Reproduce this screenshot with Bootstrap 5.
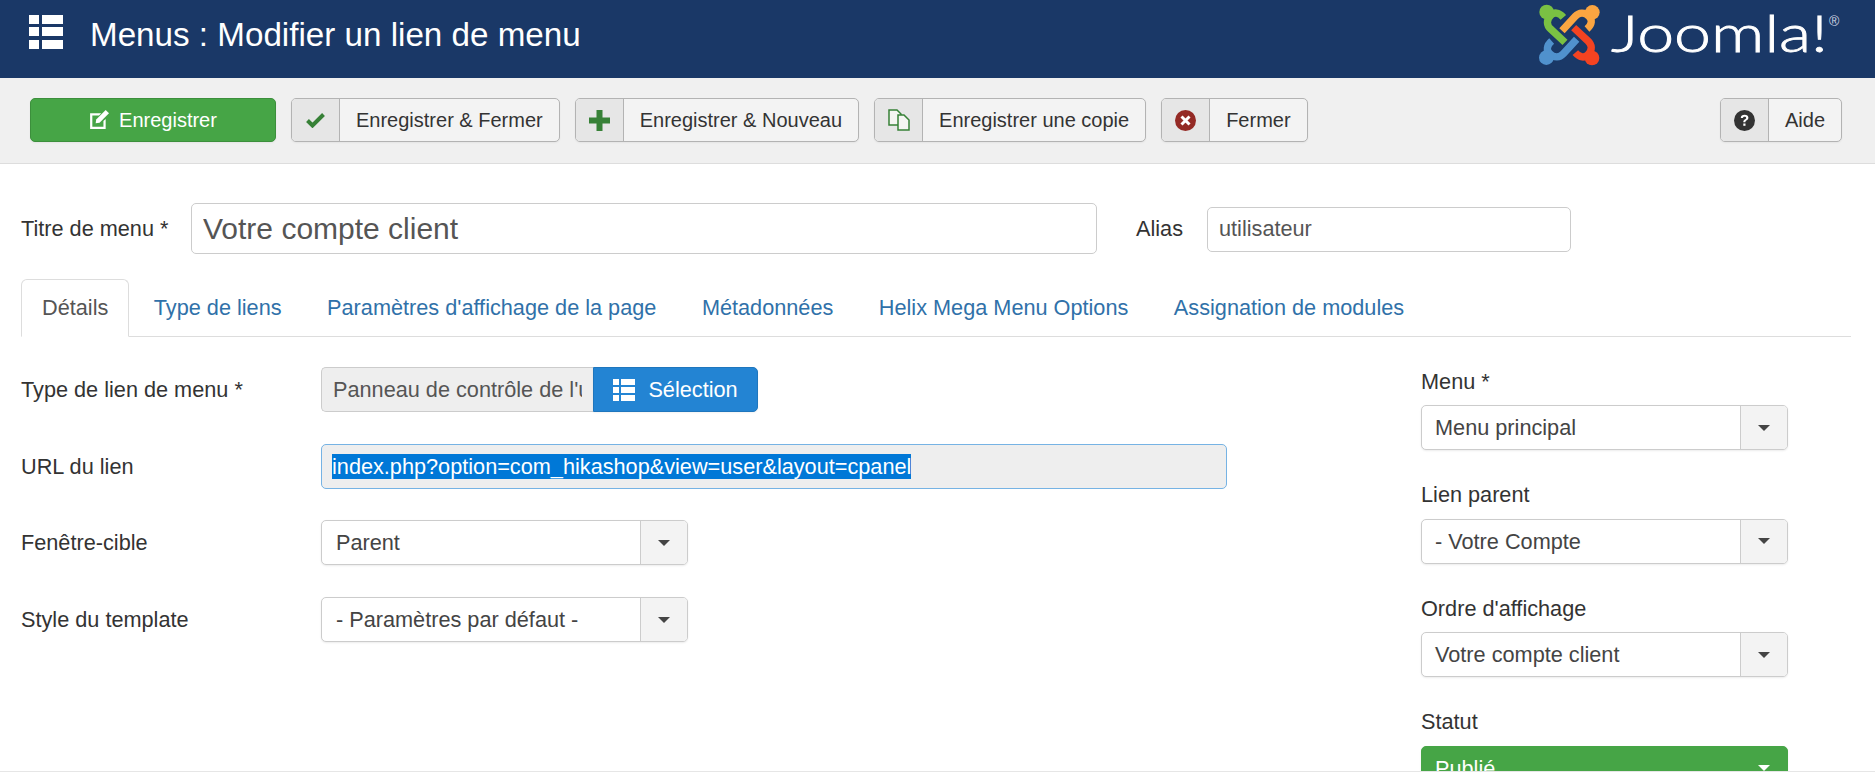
<!DOCTYPE html>
<html lang="fr">
<head>
<meta charset="utf-8">
<title>Menus : Modifier un lien de menu</title>
<link href="https://cdn.jsdelivr.net/npm/bootstrap@5.3.0/dist/css/bootstrap.min.css" rel="stylesheet">
<style>
html,body{height:772px;overflow:hidden}
body{font-family:"Liberation Sans",Arial,sans-serif;font-size:21.7px;line-height:27px;color:#333;background:#fff}
.page-shell{height:772px}
.top-head{height:78px;background:#1a3867;padding-left:29px}
.top-head svg.grid-ico{width:34px;height:34px;fill:#fff;margin-right:27px;margin-bottom:15px}
.top-title{font-size:33.2px;line-height:40px;color:#fff;font-weight:400;margin:0 0 8px}
.joomla-logo{width:320px;height:78px;margin-right:25px;display:block}
.joomla-word{font-family:Lato,"Liberation Sans",sans-serif;font-weight:300;font-size:52px;fill:#fff;stroke:#fff;stroke-width:.8px}
.joomla-reg{font-family:"Liberation Sans",sans-serif;font-size:14px;fill:#cfd6e2}
.tool-bar{height:86px;background:#f0f0f0;border-bottom:1px solid #ddd;padding:20px 33px 0 30px;gap:15px}
.tool-btn{height:44px;border:1px solid #b3b3b3;border-radius:5px;background:#f3f3f3;color:#333;font-size:20px;line-height:1;padding:0;box-shadow:0 1px 2px rgba(0,0,0,.05)}
.tool-ico{width:48px;height:100%;background:#e6e6e6;border-right:1px solid #b3b3b3;border-radius:4px 0 0 4px}
.tool-txt{padding:0 16px}
.tool-btn.tool-save{width:246px;background:#46a546;border-color:#3c8f3c;color:#fff;gap:10px}
.tool-ico svg,.tool-save svg{display:block}
.body-area{padding:39px 24px 0 21px;min-height:0}
.title-row{height:51px}
.title-label{width:170px}
.title-field.form-control{width:906px;height:51px;font-size:30px;color:#555;border:1px solid #ccc;border-radius:5px;padding:0 11px;box-shadow:none}
.alias-label{margin-left:39px;width:71px}
.alias-field.form-control{width:364px;height:45px;font-size:21.7px;color:#555;border:1px solid #ccc;border-radius:5px;padding:0 11px;box-shadow:none;margin-top:1px}
.tab-strip.nav-tabs{margin-top:25px;border-bottom:1px solid #ddd;--bs-nav-tabs-border-width:0}
.tab-strip .nav-link{padding:0 20px;height:58px;line-height:56px;border:1px solid transparent;border-radius:6px 6px 0 0;color:#3071a9;font-size:21.7px;margin-right:3.500px;margin-bottom:-1px}
.tab-strip .nav-link.active{color:#555;background:#fff;border-color:#ddd #ddd #fff}
.main-col{width:1400px;padding-top:30px;gap:31.7px}
.side-col{width:367px;padding-top:30.500px}
.field-row{height:45px}
.field-label{width:300px}
.type-box{width:272px;height:45px;background:#eee;border:1px solid #ccc;border-right:0;border-radius:5px 0 0 5px;padding:0 11px;color:#555;white-space:nowrap;overflow:hidden;line-height:44px}
.type-clip{overflow:hidden;width:100%}
.type-pick{width:165px;height:45px;background:#2384d3;border:1px solid #1f76bd;border-radius:0 5px 5px 0;color:#fff;font-size:21.7px;gap:13px;padding:1px 0 0;box-shadow:0 1px 2px rgba(0,0,0,.05)}
.type-pick svg{fill:#fff;display:block}
.url-box{width:906px;height:45px;background:#eee;border:1px solid #76b3e4;border-radius:5px;padding:0 10px;color:#000}
.url-sel{background:#0078d7;color:#fff;line-height:25px;white-space:nowrap}
.pick-box{height:45px;border:1px solid #ccc;border-radius:5px;background:#fff;color:#444;box-shadow:0 1px 2px rgba(0,0,0,.08);overflow:hidden}
.pick-wide{width:367px}
.pick-wide .pick-text{padding-left:14px}
.pick-side{width:367px}
.pick-text{padding:0 13px;white-space:nowrap}
.pick-caret{width:47px;height:100%;background:#f3f3f3;border-left:1px solid #ccc}
.pick-caret i{display:block;width:0;height:0;border-left:6px solid transparent;border-right:6px solid transparent;border-top:6px solid #444}
.side-label{height:28px;line-height:28px;margin-bottom:9.500px}
.side-group{margin-bottom:31px}
.pick-green{background:#46a546;border-color:#46a546;color:#fff;align-items:flex-start}
.pick-green .pick-caret{background:transparent;border:0}
.pick-green .pick-caret i{border-top-color:#fff}
.pick-green .pick-text{line-height:43px}
.foot-line{height:1px;background:#e6e6e6}
</style>
</head>
<body>
<div class="page-shell d-flex flex-column">
  <header class="top-head d-flex align-items-center flex-shrink-0">
    <svg class="grid-ico" viewBox="0 0 34 34"><rect x="0" y="0" width="10" height="9"/><rect x="13" y="0" width="21" height="9"/><rect x="0" y="12" width="10" height="9"/><rect x="13" y="12" width="21" height="9"/><rect x="0" y="25" width="10" height="9"/><rect x="13" y="25" width="21" height="9"/></svg>
    <h1 class="top-title">Menus : Modifier un lien de menu</h1>
    <svg class="joomla-logo ms-auto" viewBox="0 0 320 78">
      <g transform="scale(.3333)">
        <g fill="none" stroke-linejoin="round">
          <g transform="rotate(270 118 105)"><path d="M100 52C86 36 72 36 62 46C48 60 50 76 62 87L105 127" stroke="#1a3867" stroke-width="29"/><path d="M100 52C86 36 72 36 62 46C48 60 50 76 62 87L105 127" stroke="#5091cd" stroke-width="22"/><circle cx="50" cy="36" r="22" fill="#5091cd"/></g>
          <g transform="rotate(90 118 105)"><path d="M100 52C86 36 72 36 62 46C48 60 50 76 62 87L105 127" stroke="#1a3867" stroke-width="29"/><path d="M100 52C86 36 72 36 62 46C48 60 50 76 62 87L105 127" stroke="#fba541" stroke-width="22"/><circle cx="50" cy="36" r="22" fill="#fba541"/></g>
          <g transform="rotate(180 118 105)"><path d="M100 52C86 36 72 36 62 46C48 60 50 76 62 87L105 127" stroke="#1a3867" stroke-width="29"/><path d="M100 52C86 36 72 36 62 46C48 60 50 76 62 87L105 127" stroke="#f44321" stroke-width="22"/><circle cx="50" cy="36" r="22" fill="#f44321"/></g>
          <g><path d="M100 52C86 36 72 36 62 46C48 60 50 76 62 87L105 127" stroke="#1a3867" stroke-width="29"/><path d="M100 52C86 36 72 36 62 46C48 60 50 76 62 87L105 127" stroke="#7ac143" stroke-width="22"/><circle cx="50" cy="36" r="22" fill="#7ac143"/></g>
        </g>
      </g>
      <text class="joomla-word" x="81" y="52" textLength="217" lengthAdjust="spacingAndGlyphs">Joomla!</text>
      <text class="joomla-reg" x="299" y="26">®</text>
    </svg>
  </header>

  <div class="tool-bar d-flex flex-shrink-0">
    <button type="button" class="btn tool-btn tool-save d-flex align-items-center justify-content-center">
      <svg width="20" height="20" viewBox="0 0 18 18" fill="#fff"><path d="M1 3h10L9 5H3v10h10V10l2-2v9H1z"/><path d="M15 0l3 3-8.500 8.500-3.500.5.500-3.500z"/></svg>
      <span>Enregistrer</span>
    </button>
    <button type="button" class="btn tool-btn d-flex align-items-center">
      <span class="tool-ico d-flex align-items-center justify-content-center"><svg width="19" height="16" viewBox="0 0 19 16"><path d="M1.500 8.500l5 5L17.500 2.500" fill="none" stroke="#378137" stroke-width="4"/></svg></span>
      <span class="tool-txt">Enregistrer &amp; Fermer</span>
    </button>
    <button type="button" class="btn tool-btn d-flex align-items-center">
      <span class="tool-ico d-flex align-items-center justify-content-center"><svg width="21" height="21" viewBox="0 0 21 21"><path d="M7.500 0h6v7.500H21v6h-7.500V21h-6v-7.500H0v-6h7.500z" fill="#378137"/></svg></span>
      <span class="tool-txt">Enregistrer &amp; Nouveau</span>
    </button>
    <button type="button" class="btn tool-btn d-flex align-items-center">
      <span class="tool-ico d-flex align-items-center justify-content-center"><svg width="22" height="22" viewBox="0 0 22 22" fill="#f5f5f2" stroke="#378137" stroke-width="1.500"><path d="M1 1h8l4 4v11H1z"/><path d="M10 6h6l5 5v10H10z"/></svg></span>
      <span class="tool-txt">Enregistrer une copie</span>
    </button>
    <button type="button" class="btn tool-btn d-flex align-items-center">
      <span class="tool-ico d-flex align-items-center justify-content-center"><svg width="21" height="21" viewBox="0 0 21 21"><circle cx="10.500" cy="10.500" r="10.500" fill="#942a25"/><path d="M6.500 6.500l8 8M14.500 6.500l-8 8" stroke="#fff" stroke-width="3"/></svg></span>
      <span class="tool-txt">Fermer</span>
    </button>
    <button type="button" class="btn tool-btn d-flex align-items-center ms-auto">
      <span class="tool-ico d-flex align-items-center justify-content-center"><svg width="21" height="21" viewBox="0 0 21 21"><circle cx="10.500" cy="10.500" r="10.500" fill="#333"/><path d="M6.800 8c0-2 1.600-3.200 3.800-3.200s3.800 1.200 3.800 3c0 2.500-3 2.500-3 4.400H9.300c0-3 2.900-3 2.900-4.300 0-.7-.6-1.200-1.600-1.200S8.900 7.300 8.900 8z" fill="#fff"/><rect x="9.300" y="13.500" width="2.200" height="2.300" fill="#fff"/></svg></span>
      <span class="tool-txt">Aide</span>
    </button>
  </div>

  <main class="body-area flex-grow-1 overflow-hidden">
    <div class="title-row d-flex align-items-center">
      <label class="title-label" for="ttl">Titre de menu *</label>
      <input id="ttl" class="form-control title-field" value="Votre compte client">
      <label class="alias-label" for="als">Alias</label>
      <input id="als" class="form-control alias-field" value="utilisateur">
    </div>

    <ul class="nav nav-tabs tab-strip">
      <li class="nav-item"><a class="nav-link active" href="#">Détails</a></li>
      <li class="nav-item"><a class="nav-link" href="#">Type de liens</a></li>
      <li class="nav-item"><a class="nav-link" href="#">Paramètres d'affichage de la page</a></li>
      <li class="nav-item"><a class="nav-link" href="#">Métadonnées</a></li>
      <li class="nav-item"><a class="nav-link" href="#">Helix Mega Menu Options</a></li>
      <li class="nav-item"><a class="nav-link" href="#">Assignation de modules</a></li>
    </ul>

    <div class="d-flex">
      <div class="main-col d-flex flex-column">
        <div class="field-row d-flex align-items-center">
          <div class="field-label">Type de lien de menu *</div>
          <div class="type-box"><div class="type-clip">Panneau de contrôle de l'utilisateur</div></div>
          <button type="button" class="btn type-pick d-flex align-items-center justify-content-center">
            <svg width="22" height="22" viewBox="0 0 22 22"><rect width="6" height="6"/><rect x="8" width="14" height="6"/><rect y="8" width="6" height="6"/><rect x="8" y="8" width="14" height="6"/><rect y="16" width="6" height="6"/><rect x="8" y="16" width="14" height="6"/></svg>
            <span>Sélection</span>
          </button>
        </div>
        <div class="field-row d-flex align-items-center">
          <div class="field-label">URL du lien</div>
          <div class="url-box d-flex align-items-center"><span class="url-sel">index.php?option=com_hikashop&amp;view=user&amp;layout=cpanel</span></div>
        </div>
        <div class="field-row d-flex align-items-center">
          <div class="field-label">Fenêtre-cible</div>
          <div class="pick-box pick-wide d-flex align-items-center justify-content-between"><span class="pick-text">Parent</span><span class="pick-caret d-flex align-items-center justify-content-center"><i></i></span></div>
        </div>
        <div class="field-row d-flex align-items-center">
          <div class="field-label">Style du template</div>
          <div class="pick-box pick-wide d-flex align-items-center justify-content-between"><span class="pick-text">- Paramètres par défaut -</span><span class="pick-caret d-flex align-items-center justify-content-center"><i></i></span></div>
        </div>
      </div>
      <aside class="side-col">
        <div class="side-group">
          <div class="side-label">Menu *</div>
          <div class="pick-box pick-side d-flex align-items-center justify-content-between"><span class="pick-text">Menu principal</span><span class="pick-caret d-flex align-items-center justify-content-center"><i></i></span></div>
        </div>
        <div class="side-group">
          <div class="side-label">Lien parent</div>
          <div class="pick-box pick-side d-flex align-items-center justify-content-between"><span class="pick-text">- Votre Compte</span><span class="pick-caret d-flex align-items-center justify-content-center"><i></i></span></div>
        </div>
        <div class="side-group">
          <div class="side-label">Ordre d'affichage</div>
          <div class="pick-box pick-side d-flex align-items-center justify-content-between"><span class="pick-text">Votre compte client</span><span class="pick-caret d-flex align-items-center justify-content-center"><i></i></span></div>
        </div>
        <div class="side-group">
          <div class="side-label">Statut</div>
          <div class="pick-box pick-side pick-green d-flex justify-content-between"><span class="pick-text">Publié</span><span class="pick-caret d-flex align-items-center justify-content-center"><i></i></span></div>
        </div>
      </aside>
    </div>
  </main>
  <div class="foot-line flex-shrink-0"></div>
</div>
<script src="https://cdn.jsdelivr.net/npm/bootstrap@5.3.0/dist/js/bootstrap.bundle.min.js"></script>
</body>
</html>
